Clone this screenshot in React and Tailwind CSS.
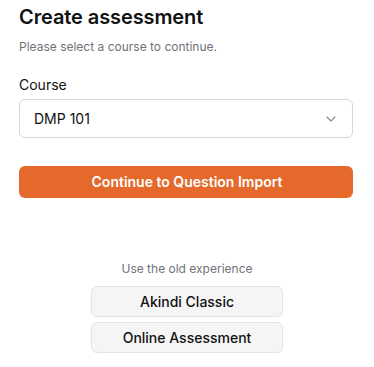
import React from "react";

export default function App() {
  return (
    <div
      className="w-[374px] h-[367px] bg-white pl-[19px] pr-[21px] pt-[3px]"
      style={{ fontFamily: "Inter, 'Noto Sans', sans-serif" }}
    >
      <h1 className="text-[20px] leading-[28px] font-semibold text-[#111111] tracking-[-0.1px]">
        Create assessment
      </h1>
      <p className="mt-2 text-[12px] leading-[16px] text-[#71717a]">
        Please select a course to continue.
      </p>
      <label className="block mt-5 text-[14px] leading-[20px] text-[#111111]">
        Course
      </label>
      <div className="mt-1 h-[39px] w-full rounded-[6px] border border-[#cfd6e2] flex items-center justify-between pl-[14px] pr-[16px]">
        <span className="text-[14px] leading-[20px] text-[#111111]">DMP 101</span>
        <svg width="10" height="6" viewBox="0 0 10 6" fill="none" className="mt-[1px]">
          <path d="M1 1l4 4 4-4" stroke="#8a8f98" strokeWidth="1.2" strokeLinecap="round" strokeLinejoin="round" />
        </svg>
      </div>
      <button className="mt-7 h-8 w-full rounded-[6px] bg-[#e5692a] text-white text-[14px] font-semibold leading-[20px] flex items-center justify-center pl-[2px]">
        Continue to Question Import
      </button>
      <div className="mt-[63px] pl-[2px] flex flex-col items-center">
        <p className="text-[12px] leading-[16px] text-[#71717a]">Use the old experience</p>
        <button className="mt-[9px] h-[31px] w-[192px] rounded-[6px] bg-[#f5f5f5] border border-[#e4e4e7] text-[14px] font-medium text-[#111111] flex items-center justify-center">
          Akindi Classic
        </button>
        <button className="mt-[5px] h-[31px] w-[192px] rounded-[6px] bg-[#f5f5f5] border border-[#e4e4e7] text-[14px] font-medium text-[#111111] flex items-center justify-center">
          Online Assessment
        </button>
      </div>
    </div>
  );
}
